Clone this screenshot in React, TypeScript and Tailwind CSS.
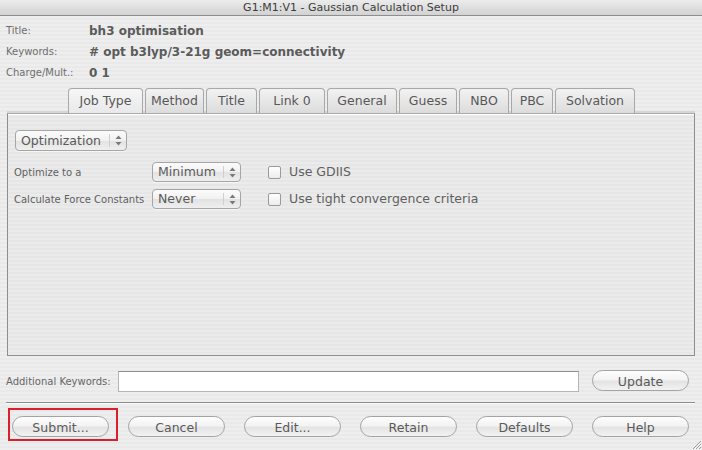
import React from "react";

const FONT = "font-['DejaVu_Sans',sans-serif]";

function Arrows() {
  return (
    <svg width="7" height="11" viewBox="0 0 7 11">
      <path d="M3.5 0.5 L6.5 4 L0.5 4 Z" fill="#7a7a7a" />
      <path d="M3.5 10.5 L6.5 7 L0.5 7 Z" fill="#7a7a7a" />
    </svg>
  );
}

function Popup({ label, w, h = "h-[21px]" }: { label: string; w: string; h?: string }) {
  return (
    <div
      className={`${w} ${h} flex items-stretch rounded-[4px] border border-[#a5a5a5] bg-[linear-gradient(180deg,#fbfbfb_0%,#f1f1f1_50%,#e2e2e2_51%,#efefef_100%)] shadow-[0_1px_0_rgba(255,255,255,0.6)]`}
    >
      <div className="flex-1 flex items-center pl-[5px] text-[12.5px] text-[#5a5a5a] leading-none pt-[1px]">{label}</div>
      <div className="w-[17px] flex items-center justify-center border-l border-[#cfcfcf] my-[3px]">
        <Arrows />
      </div>
    </div>
  );
}

function Check({ label }: { label: string }) {
  return (
    <div className="flex items-center gap-[8px]">
      <div className="w-[13px] h-[13px] rounded-[2px] border border-[#9a9a9a] bg-[linear-gradient(180deg,#ffffff,#ececec)]" />
      <span className="text-[12.5px] text-[#5f5f5f] leading-none">{label}</span>
    </div>
  );
}

function Capsule({ label, w = "w-[97px]" }: { label: string; w?: string }) {
  return (
    <div
      className={`${w} h-[21px] rounded-full border border-[#a3a3a3] bg-[linear-gradient(180deg,#fdfdfd_0%,#f3f3f3_45%,#e4e4e4_55%,#f2f2f2_100%)] flex items-center justify-center text-[12.5px] text-[#5a5a5a] leading-none pt-[4px]`}
    >
      {label}
    </div>
  );
}

const tabs: { label: string; w: string; sel?: boolean }[] = [
  { label: "Job Type", w: "w-[75px]", sel: true },
  { label: "Method", w: "w-[59px]" },
  { label: "Title", w: "w-[51px]" },
  { label: "Link 0", w: "w-[66px]" },
  { label: "General", w: "w-[70px]" },
  { label: "Guess", w: "w-[58px]" },
  { label: "NBO", w: "w-[50px]" },
  { label: "PBC", w: "w-[42px]" },
  { label: "Solvation", w: "w-[80px]" },
];

export default function App() {
  return (
    <div
      className={`${FONT} w-[702px] h-[450px] overflow-hidden relative flex flex-col bg-[repeating-linear-gradient(180deg,#eeeeee_0px,#eeeeee_2px,#e9e9e9_2px,#e9e9e9_4px)]`}
    >
      {/* Title bar */}
      <div className="h-[16px] shrink-0 flex items-center justify-center border-b border-[#8e8e8e] bg-[linear-gradient(180deg,#ececec,#d2d2d2)] text-[11px] text-[#3c3c3c] leading-none">
        G1:M1:V1 - Gaussian Calculation Setup
      </div>

      {/* Header rows */}
      <div className="pt-[4px] flex flex-col">
        {[
          ["Title:", "bh3 optimisation"],
          ["Keywords:", "# opt b3lyp/3-21g geom=connectivity"],
          ["Charge/Mult.:", "0 1"],
        ].map(([l, v]) => (
          <div key={l} className="h-[21px] flex items-center">
            <span className="w-[89px] pl-[6px] text-[10px] text-[#6e6e6e]">{l}</span>
            <span className="text-[12px] font-bold text-[#5b5b5b]">{v}</span>
          </div>
        ))}
      </div>

      {/* Tabs */}
      <div className="mt-[5px] flex gap-[2px] pl-[68px] h-[25px] relative z-10">
        {tabs.map((t) => (
          <div
            key={t.label}
            className={`${t.w} h-[25px] rounded-t-[4px] border border-b-0 border-[#a8a8a8] flex items-center justify-center text-[12.5px] text-[#585858] leading-none pt-[1px] ${
              t.sel
                ? "bg-[linear-gradient(180deg,#f6f6f6,#e9e9e9)]"
                : "bg-[linear-gradient(180deg,#f2f2f2_0%,#e5e5e5_60%,#dcdcdc_100%)]"
            }`}
          >
            {t.label}
          </div>
        ))}
      </div>

      {/* Panel */}
      <div className="ml-[7px] w-[688px] h-[243px] border border-[#8e8e8e] border-t-[#aaaaaa] shadow-[inset_0_1px_0_#ffffff,0_-2px_0_#d6d6d6] flex flex-col bg-[repeating-linear-gradient(180deg,#ebebeb_0px,#ebebeb_2px,#e6e6e6_2px,#e6e6e6_4px)]">
        <div className="mt-[16px] ml-[7px]">
          <Popup label="Optimization" w="w-[112px]" />
        </div>
        <div className="mt-[11px] flex items-center h-[20px]">
          <span className="w-[144px] pl-[6px] text-[10px] text-[#5f5f5f]">Optimize to a</span>
          <Popup label="Minimum" w="w-[89px]" h="h-[20px]" />
          <div className="ml-[27px]">
            <Check label="Use GDIIS" />
          </div>
        </div>
        <div className="mt-[7px] flex items-center h-[20px]">
          <span className="w-[144px] pl-[6px] text-[10px] text-[#5f5f5f]">Calculate Force Constants</span>
          <Popup label="Never" w="w-[89px]" h="h-[20px]" />
          <div className="ml-[27px]">
            <Check label="Use tight convergence criteria" />
          </div>
        </div>
      </div>

      {/* Additional keywords */}
      <div className="mt-[13px] flex items-center h-[23px]">
        <span className="w-[118px] pl-[6px] text-[10px] text-[#666666] pt-[2px]">Additional Keywords:</span>
        <div className="w-[461px] h-[21px] bg-white border border-[#b5b5b5] border-t-[#8f8f8f] mt-[2px]" />
        <div className="ml-[13px]">
          <Capsule label="Update" />
        </div>
      </div>

      {/* Separator */}
      <div className="mt-[10px] ml-[6px] w-[689px] h-[2px] border-t border-[#8c8c8c] border-b border-b-[#fafafa]" />

      {/* Buttons */}
      <div className="mt-[12px] flex gap-[19px] pl-[12px] relative">
        <div className="absolute left-[8px] top-[-8px] w-[110px] h-[33px] border-2 border-[#d9202a]" />
        <Capsule label="Submit..." />
        <Capsule label="Cancel" />
        <Capsule label="Edit..." />
        <Capsule label="Retain" />
        <Capsule label="Defaults" />
        <Capsule label="Help" />
      </div>

      {/* Resize grip */}
      <svg className="absolute right-0 bottom-0" width="12" height="12" viewBox="0 0 12 12">
        <path d="M11 3 L3 11 M11 6 L6 11 M11 9 L9 11" stroke="#9a9a9a" strokeWidth="1" />
        <path d="M11.5 4 L4 11.5 M11.5 7 L7 11.5" stroke="#ffffff" strokeWidth="0.7" />
      </svg>
    </div>
  );
}
